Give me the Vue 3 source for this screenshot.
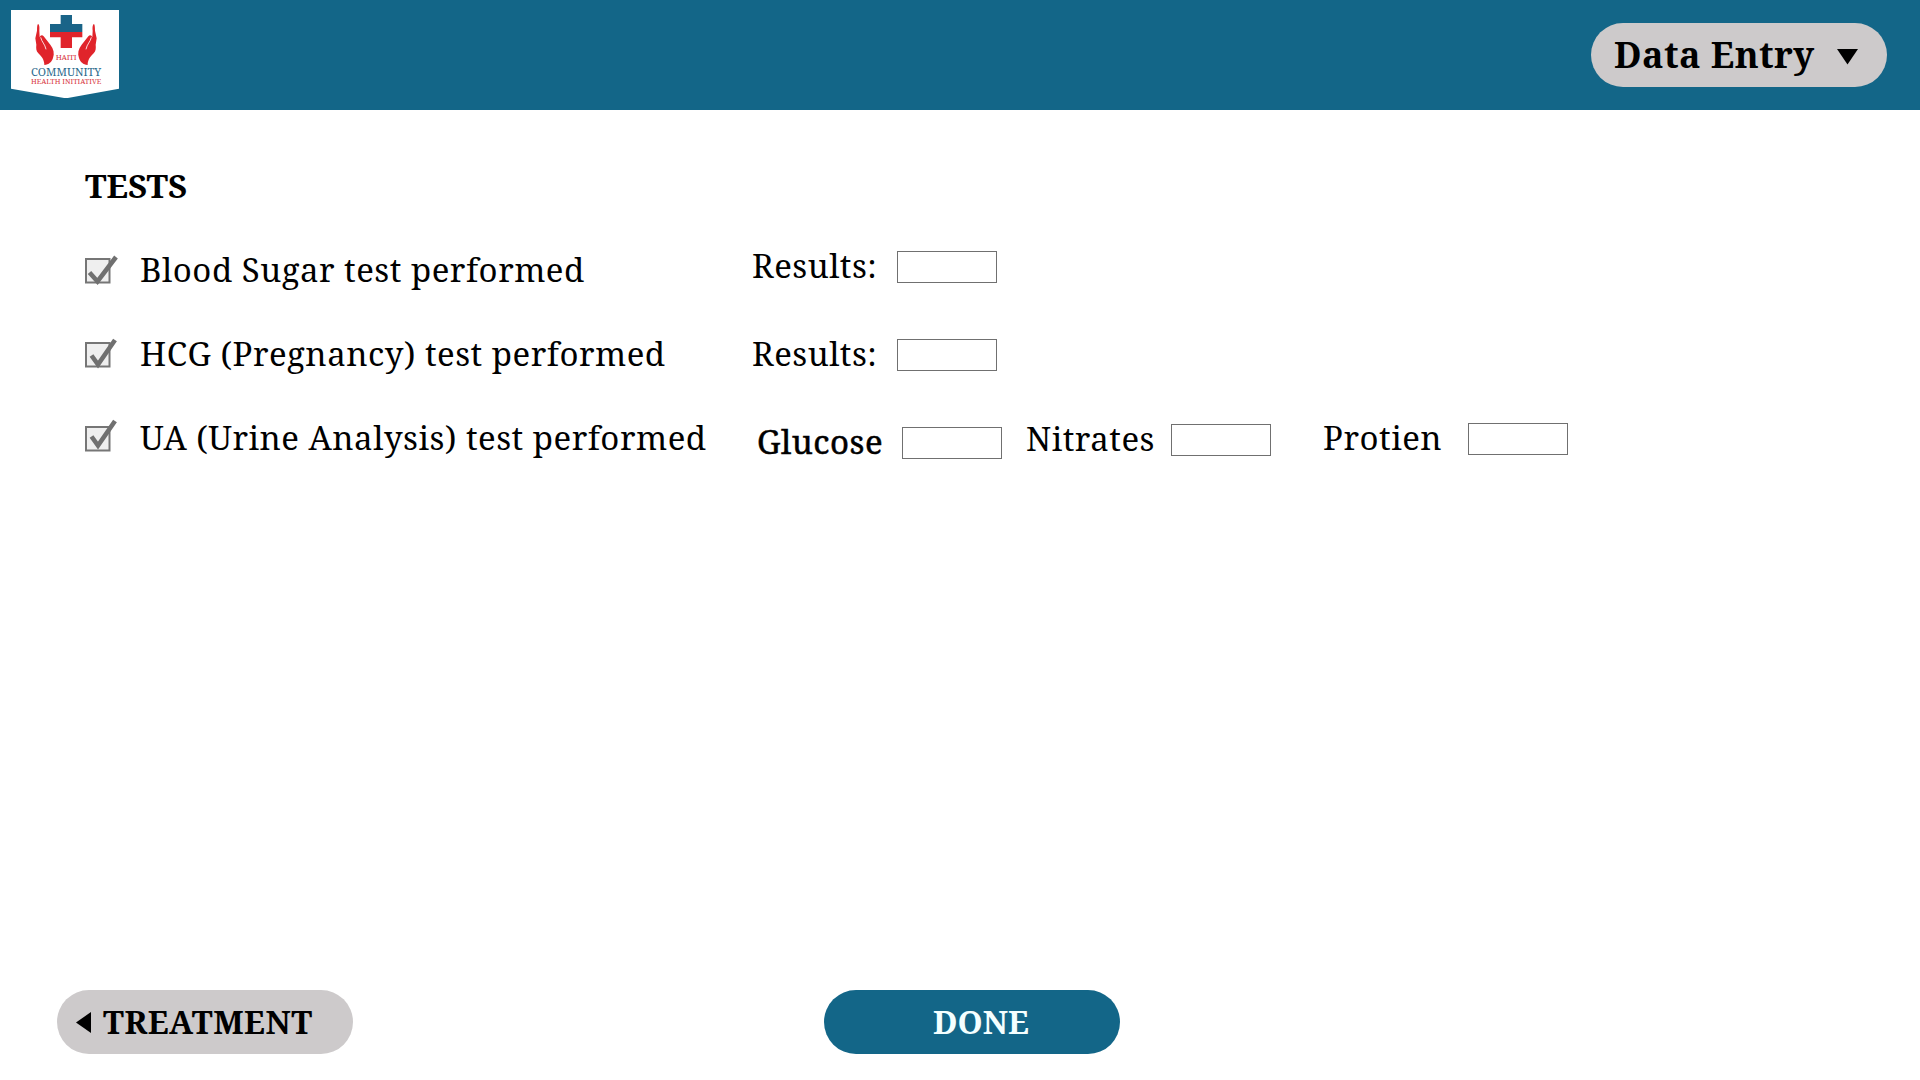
<script setup>
import { reactive } from 'vue'

const tests = reactive([
  { id: 'sugar', label: 'Blood Sugar test performed', tick: 'M4.5 19.5 L12.5 28.5 L31 4', fields: [{ name: 'Results:' }] },
  { id: 'hcg', label: 'HCG (Pregnancy) test performed', tick: 'M6.5 18.5 L13 27.5 L30 3', fields: [{ name: 'Results:' }] },
  {
    id: 'ua',
    label: 'UA (Urine Analysis) test performed',
    tick: 'M6.5 15.5 L13 24.5 L30 0',
    fields: [
      { name: 'Glucose', kind: 'glucose' },
      { name: 'Nitrates', kind: 'nitrates' },
      { name: 'Protien', kind: 'protien' },
    ],
  },
])
</script>

<template>
  <div class="page">
    <header class="topbar">
      <svg class="logo" viewBox="33 30 324 265" width="108" height="88.33">
        <path d="M33 30H357V266L198 295L33 266Z" fill="#fff" />
        <path d="M182 45H216V72H247V96H150V72H182Z" fill="#1a6488" />
        <path d="M150 96H247V112H216V144H182V112H150Z" fill="#e0242b" />
        <g id="hand" fill="#e0242b">
          <path d="M114 72C118 73 119 82 118 92L119 112C121 105 127 104 131 109L151 134C161 147 164 160 159 174C155 186 147 194 133 195C133 180 125 169 115 160C108 153 108 145 109 134L106 115L111 92C111 80 112 74 114 72Z" />
          <path d="M122 112C125 126 135 132 138 148" fill="none" stroke="#fff" stroke-width="2.5" />
        </g>
        <g fill="#e0242b" transform="matrix(-1 0 0 1 396 0)">
          <path d="M114 72C118 73 119 82 118 92L119 112C121 105 127 104 131 109L151 134C161 147 164 160 159 174C155 186 147 194 133 195C133 180 125 169 115 160C108 153 108 145 109 134L106 115L111 92C111 80 112 74 114 72Z" />
          <path d="M122 112C125 126 135 132 138 148" fill="none" stroke="#fff" stroke-width="2.5" />
        </g>
        <text x="167" y="180" font-size="23" textLength="63" fill="#d8393f">HAITI</text>
        <text x="93" y="229" font-size="30" textLength="211" lengthAdjust="spacingAndGlyphs" fill="#2b6b8d">COMMUNITY</text>
        <text x="93" y="253" font-size="20" textLength="211" lengthAdjust="spacingAndGlyphs" fill="#d8393f">HEALTH INITIATIVE</text>
      </svg>
      <button class="pill menu">
        <span>Data Entry</span>
        <svg width="21" height="16" viewBox="0 0 21 16"><path d="M0 0H21L10.5 15.5Z" /></svg>
      </button>
    </header>

    <main class="content">
      <section class="checks">
        <h1>TESTS</h1>
        <div v-for="t in tests" :key="t.id" class="check">
          <svg class="box" width="36" height="34" viewBox="0 0 36 34">
            <rect x="1" y="6" width="23.5" height="23.5" fill="#efefef" stroke="#767676" stroke-width="2" />
            <path :d="t.tick" fill="none" stroke="#707070" stroke-width="4.6" />
          </svg>
          <span>{{ t.label }}</span>
        </div>
      </section>
      <section class="results">
        <div v-for="t in tests" :key="t.id" class="fields">
          <label v-for="f in t.fields" :key="f.name" class="field" :class="f.kind">
            <span>{{ f.name }}</span>
            <input type="text" />
          </label>
        </div>
      </section>
    </main>

    <footer class="actions">
      <button class="pill back">
        <svg width="15" height="21" viewBox="0 0 15 21"><path d="M15 0V21L0 10.5Z" /></svg>
        <span>TREATMENT</span>
      </button>
      <button class="pill done"><span>DONE</span></button>
    </footer>
  </div>
</template>

<style>
body {
  margin: 0;
  background: #fff;
}
</style>

<style scoped>
.page {
  display: flex;
  flex-direction: column;
  width: 1920px;
  height: 1080px;
  overflow: hidden;
  box-sizing: border-box;
  color: #000;
  font-family: "Noto Serif", "DejaVu Serif Condensed", "DejaVu Serif", serif;
  font-size: 33px;
  line-height: 40px;
  letter-spacing: 0.5px;
  white-space: nowrap;
}
.topbar {
  display: flex;
  justify-content: space-between;
  align-items: flex-start;
  height: 110px;
  flex: none;
  box-sizing: border-box;
  padding: 10px 33px 0 11px;
  background: #136688;
}
.logo {
  display: block;
  letter-spacing: 0;
}
.pill {
  display: flex;
  align-items: center;
  box-sizing: border-box;
  width: 296px;
  height: 64px;
  padding: 0;
  border: 0;
  border-radius: 32px;
  background: #cdcacb;
  color: #000;
  font: bold 32px/40px "Noto Serif", "DejaVu Serif Condensed", "DejaVu Serif", serif;
}
.menu {
  margin-top: 13px;
  padding-left: 23px;
  font-size: 36px;
  letter-spacing: 0.4px;
}
.menu svg {
  margin: 4px 0 0 22px;
}
.content {
  display: flex;
  flex: 1;
  padding: 56px 0 0 85px;
}
.checks {
  display: flex;
  flex-direction: column;
  gap: 44px;
  width: 667px;
}
h1 {
  margin: 0;
  font-size: 33px;
  line-height: 40px;
  letter-spacing: 0;
}
.check {
  display: flex;
  height: 40px;
}
.box {
  margin: 3px 19px 0 0;
  overflow: visible;
}
.results {
  display: flex;
  flex-direction: column;
  gap: 48px;
  padding-top: 80px;
}
.fields {
  display: flex;
  align-items: flex-start;
  height: 40px;
}
.fields:last-child {
  margin-top: -4px;
}
.field {
  display: flex;
}
.field span {
  width: 145px;
}
.field input {
  width: 100px;
  height: 32px;
  box-sizing: border-box;
  margin: 5px 0 0;
  padding: 0 6px;
  border: 1px solid #707070;
  background: #fff;
  font: inherit;
  font-size: 22px;
}
.glucose {
  margin: 4px 0 0 5px;
  -webkit-text-stroke: 0.5px #000;
}
.nitrates {
  margin: 1px 0 0 24px;
}
.protien {
  margin-left: 52px;
}
.protien span {
  width: 145px;
}
.actions {
  display: flex;
  gap: 471px;
  flex: none;
  height: 90px;
  padding-left: 57px;
}
.back {
  padding-left: 19px;
  letter-spacing: 0.5px;
}
.back svg {
  margin: 1px 12px 0 0;
}
.done {
  padding-left: 109px;
  background: #136688;
  color: #f4ffff;
}
</style>
